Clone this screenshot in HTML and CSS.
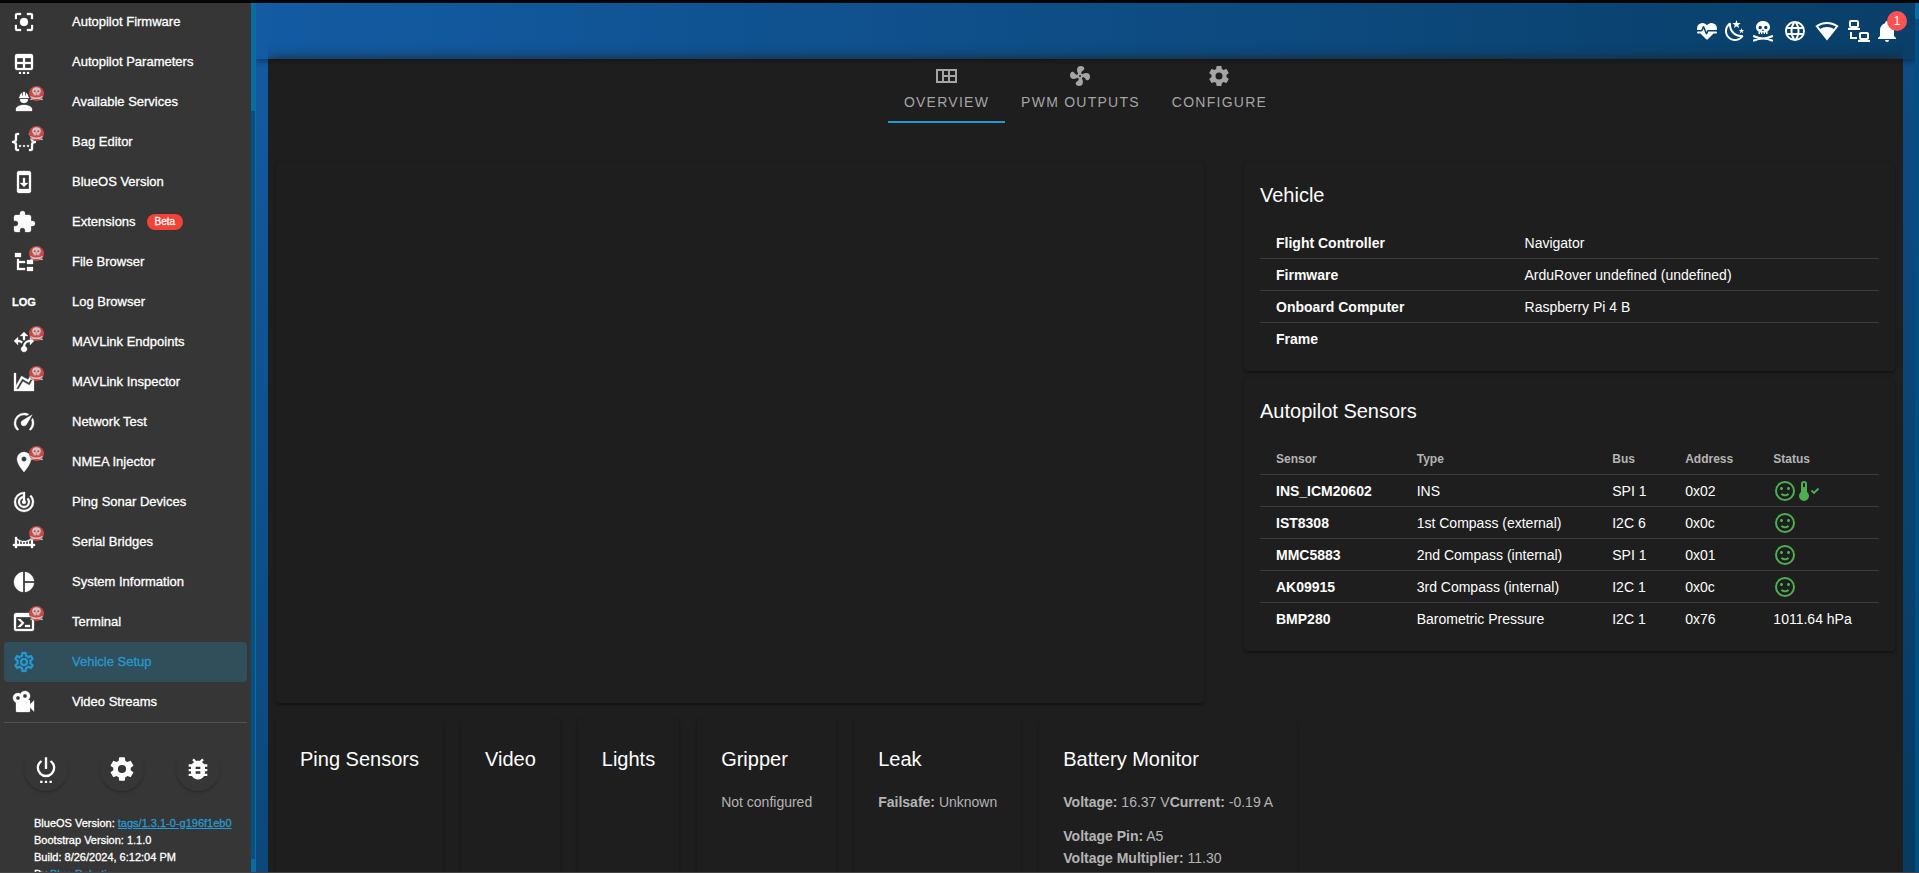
FILE: index.html
```html
<!DOCTYPE html>
<html lang="en">
<head>
<meta charset="utf-8">
<title>BlueOS - Vehicle Setup</title>
<link rel="stylesheet" href="styles.css">
</head>
<body>
<svg class="defs" aria-hidden="true">
  <symbol id="skull" viewBox="0 0 24 24"><path fill-rule="evenodd" d="M12 2C8 2 5 4.600 5 8.200C5 10.200 6 11.600 7.500 12.500V15H9V13.500H10V15H11.300V13.500H12.700V15H14V13.500H15V15H16.500V12.500C18 11.600 19 10.200 19 8.200C19 4.600 16 2 12 2M9.200 6.800A1.700 1.700 0 1 1 9.200 10.200A1.700 1.700 0 1 1 9.200 6.800M14.800 6.800A1.700 1.700 0 1 1 14.800 10.200A1.700 1.700 0 1 1 14.800 6.800M12 10L13 12H11Z"/><path d="M3 17.200Q7 19.500 12 19.500T21 21.500M21 17.200Q17 19.500 12 19.500T3 21.500" fill="none" stroke="currentColor" stroke-width="2.200" stroke-linecap="round"/></symbol>
  <symbol id="cog" viewBox="0 0 24 24"><path d="M12,15.5A3.5,3.5 0 0,1 8.500,12A3.500,3.500 0 0,1 12,8.500A3.500,3.500 0 0,1 15.500,12A3.500,3.500 0 0,1 12,15.500M19.430,12.970C19.470,12.650 19.500,12.330 19.500,12C19.500,11.670 19.470,11.340 19.430,11L21.540,9.370C21.730,9.220 21.780,8.950 21.660,8.730L19.660,5.270C19.540,5.050 19.270,4.960 19.050,5.050L16.560,6.050C16.040,5.660 15.500,5.320 14.870,5.070L14.500,2.420C14.460,2.180 14.250,2 14,2H10C9.750,2 9.540,2.180 9.500,2.420L9.130,5.070C8.500,5.320 7.960,5.660 7.440,6.050L4.950,5.050C4.730,4.960 4.460,5.050 4.340,5.270L2.340,8.730C2.210,8.950 2.270,9.220 2.460,9.370L4.570,11C4.530,11.340 4.500,11.670 4.500,12C4.500,12.330 4.530,12.650 4.570,12.970L2.460,14.630C2.270,14.780 2.210,15.050 2.340,15.270L4.340,18.730C4.460,18.950 4.730,19.030 4.950,18.950L7.440,17.940C7.960,18.340 8.500,18.680 9.130,18.930L9.500,21.580C9.540,21.820 9.750,22 10,22H14C14.250,22 14.460,21.820 14.500,21.580L14.870,18.930C15.500,18.670 16.040,18.340 16.560,17.940L19.050,18.950C19.270,19.030 19.540,18.950 19.660,18.730L21.660,15.270C21.780,15.050 21.730,14.780 21.540,14.630L19.430,12.970Z"/></symbol>
  <symbol id="smile" viewBox="0 0 24 24"><path d="M20,12A8,8 0 0,0 12,4A8,8 0 0,0 4,12A8,8 0 0,0 12,20A8,8 0 0,0 20,12M22,12A10,10 0 0,1 12,22A10,10 0 0,1 2,12A10,10 0 0,1 12,2A10,10 0 0,1 22,12M10,9.5C10,10.3 9.3,11 8.5,11C7.7,11 7,10.3 7,9.5C7,8.7 7.7,8 8.5,8C9.3,8 10,8.7 10,9.5M17,9.5C17,10.3 16.3,11 15.5,11C14.7,11 14,10.3 14,9.5C14,8.7 14.7,8 15.5,8C16.3,8 17,8.7 17,9.5M12,17.23C10.25,17.23 8.71,16.5 7.81,15.42L9.23,14C9.68,14.72 10.75,15.23 12,15.23C13.25,15.23 14.32,14.72 14.77,14L16.19,15.42C15.29,16.5 13.75,17.23 12,17.23Z"/></symbol>
</svg>
<div class="top-edge"></div>
<div class="app">
  <aside class="sidebar">
    <nav class="nav" aria-label="Main">
      <a class="nav-item" href="#"><span class="nav-icon"><svg class="icon" viewBox="0 0 24 24"><path d="M5,15H3V19A2,2 0 0,0 5,21H9V19H5M5,5H9V3H5A2,2 0 0,0 3,5V9H5M19,3H15V5H19V9H21V5A2,2 0 0,0 19,3M19,19H15V21H19A2,2 0 0,0 21,19V15H19M12,8A4,4 0 0,0 8,12A4,4 0 0,0 12,16A4,4 0 0,0 16,12A4,4 0 0,0 12,8Z"/></svg></span>Autopilot Firmware</a>
      <a class="nav-item" href="#"><span class="nav-icon"><svg class="icon" viewBox="0 0 24 24"><path fill-rule="evenodd" d="M5 4H19A2 2 0 0 1 21 6V18A2 2 0 0 1 19 20H5A2 2 0 0 1 3 18V6A2 2 0 0 1 5 4M5 8V12H11V8H5M13 8V12H19V8H13M5 14V18H11V14H5M13 14V18H19V14H13M7 22H9V24H7V22M11 22H13V24H11V22M15 22H17V24H15V22Z"/></svg></span>Autopilot Parameters</a>
      <a class="nav-item" href="#"><span class="nav-icon"><svg class="icon" viewBox="0 0 24 24"><path d="M12,15C7.58,15 4,16.79 4,19V21H20V19C20,16.79 16.42,15 12,15M8,9A4,4 0 0,0 12,13A4,4 0 0,0 16,9M11.5,2C11.2,2 11,2.21 11,2.5V5.5H10V3C10,3 7.75,3.86 7.75,6.75C7.75,6.75 7,6.89 7,8H17C16.95,6.89 16.25,6.75 16.25,6.75C16.25,3.86 14,3 14,3V5.5H13V2.5C13,2.21 12.81,2 12.5,2H11.5Z"/></svg><span class="pirate"><svg viewBox="0 0 24 24"><use href="#skull"/></svg></span></span>Available Services</a>
      <a class="nav-item" href="#"><span class="nav-icon"><svg class="icon" viewBox="0 0 24 24"><path d="M5,3H7V5H5V10A2,2 0 0,1 3,12A2,2 0 0,1 5,14V19H7V21H5C3.93,20.73 3,20.1 3,19V15A2,2 0 0,0 1,13H0V11H1A2,2 0 0,0 3,9V5A2,2 0 0,1 5,3M19,3A2,2 0 0,1 21,5V9A2,2 0 0,0 23,11H24V13H23A2,2 0 0,0 21,15V19A2,2 0 0,1 19,21H17V19H19V14A2,2 0 0,1 21,12A2,2 0 0,1 19,10V5H17V3H19M12,15A1,1 0 0,1 13,16A1,1 0 0,1 12,17A1,1 0 0,1 11,16A1,1 0 0,1 12,15M8,15A1,1 0 0,1 9,16A1,1 0 0,1 8,17A1,1 0 0,1 7,16A1,1 0 0,1 8,15M16,15A1,1 0 0,1 17,16A1,1 0 0,1 16,17A1,1 0 0,1 15,16A1,1 0 0,1 16,15Z"/></svg><span class="pirate"><svg viewBox="0 0 24 24"><use href="#skull"/></svg></span></span>Bag Editor</a>
      <a class="nav-item" href="#"><span class="nav-icon"><svg class="icon" viewBox="0 0 24 24"><path fill-rule="evenodd" d="M17,1H7C5.9,1 5,1.9 5,3V21C5,22.1 5.9,23 7,23H17C18.1,23 19,22.1 19,21V3C19,1.9 18.1,1 17,1M17,19H7V5H17V19M16,13H13V8H11V13H8L12,17L16,13Z"/></svg></span>BlueOS Version</a>
      <a class="nav-item" href="#"><span class="nav-icon"><svg class="icon" viewBox="0 0 24 24"><path d="M20.5,11H19V7C19,5.89 18.1,5 17,5H13V3.5A2.5,2.5 0 0,0 10.5,1A2.5,2.5 0 0,0 8,3.5V5H4A2,2 0 0,0 2,7V10.8H3.5C5,10.8 6.2,12 6.2,13.5C6.2,15 5,16.2 3.5,16.2H2V20A2,2 0 0,0 4,22H7.8V20.5C7.8,19 9,17.8 10.5,17.8C12,17.8 13.2,19 13.2,20.5V22H17A2,2 0 0,0 19,20V16H20.5A2.5,2.5 0 0,0 23,13.5A2.5,2.5 0 0,0 20.5,11Z"/></svg></span>Extensions<span class="beta">Beta</span></a>
      <a class="nav-item" href="#"><span class="nav-icon"><svg class="icon" viewBox="0 0 24 24"><path d="M3,3H9V7H3V3M15,10H21V14H15V10M15,17H21V21H15V17M13,13H7V18H13V20H7L5,20V9H7V11H13V13Z"/></svg><span class="pirate"><svg viewBox="0 0 24 24"><use href="#skull"/></svg></span></span>File Browser</a>
      <a class="nav-item" href="#"><span class="nav-icon nav-icon-log" aria-hidden="true">LOG</span>Log Browser</a>
      <a class="nav-item" href="#"><span class="nav-icon"><svg class="icon" viewBox="0 0 24 24"><path d="M9.64,13.4C8.63,12.5 7.34,12.03 6,12V15L2,11L6,7V10C7.67,10 9.3,10.57 10.63,11.59C10.22,12.15 9.89,12.76 9.64,13.4M18,15V12C17.5,12 13.5,12.16 13.05,16.2C14.61,16.75 15.43,18.47 14.88,20.03C14.33,21.59 12.61,22.41 11.05,21.86C9.5,21.3 8.67,19.59 9.22,18.03C9.5,17.17 10.2,16.5 11.05,16.2C11.34,12.61 14.4,9.88 18,10V7L22,11L18,15M12,2L8,6H11V9.5L12,10.5L13,9.5V6H16Z"/></svg><span class="pirate"><svg viewBox="0 0 24 24"><use href="#skull"/></svg></span></span>MAVLink Endpoints</a>
      <a class="nav-item" href="#"><span class="nav-icon"><svg class="icon" viewBox="0 0 24 24"><path d="M17.45,15.18L22,7.31V21H2V3H4V15.54L9.5,6L16,9.78L20.24,2.45L21.97,3.45L16.74,12.5L10.23,8.75L4.31,19H6.57L10.96,11.44L17.45,15.18Z"/></svg><span class="pirate"><svg viewBox="0 0 24 24"><use href="#skull"/></svg></span></span>MAVLink Inspector</a>
      <a class="nav-item" href="#"><span class="nav-icon"><svg class="icon" viewBox="0 0 24 24"><path d="M12,16A3,3 0 0,1 9,13C9,11.88 9.61,10.9 10.5,10.39L20.21,4.77L14.68,14.35C14.18,15.33 13.17,16 12,16M12,3C13.81,3 15.5,3.5 16.97,4.32L14.87,5.53C14,5.19 13,5 12,5A8,8 0 0,0 4,13C4,15.21 4.89,17.21 6.34,18.65H6.35C6.74,19.04 6.74,19.67 6.35,20.06C5.96,20.45 5.32,20.45 4.93,20.07V20.07C3.12,18.26 2,15.76 2,13A10,10 0 0,1 12,3M22,13C22,15.76 20.88,18.26 19.07,20.07V20.07C18.68,20.45 18.05,20.45 17.66,20.06C17.27,19.67 17.27,19.04 17.66,18.65V18.65C19.11,17.2 20,15.21 20,13C20,12 19.81,11 19.46,10.1L20.67,8C21.5,9.5 22,11.18 22,13Z"/></svg></span>Network Test</a>
      <a class="nav-item" href="#"><span class="nav-icon"><svg class="icon" viewBox="0 0 24 24"><path d="M12,11.5A2.5,2.5 0 0,1 9.5,9A2.5,2.5 0 0,1 12,6.5A2.5,2.5 0 0,1 14.5,9A2.5,2.5 0 0,1 12,11.5M12,2A7,7 0 0,0 5,9C5,14.25 12,22 12,22C12,22 19,14.25 19,9A7,7 0 0,0 12,2Z"/></svg><span class="pirate"><svg viewBox="0 0 24 24"><use href="#skull"/></svg></span></span>NMEA Injector</a>
      <a class="nav-item" href="#"><span class="nav-icon"><svg class="icon" viewBox="0 0 24 24"><path d="M19.07,4.93L17.66,6.34C19.1,7.79 20,9.79 20,12A8,8 0 0,1 12,20A8,8 0 0,1 4,12C4,7.92 7.05,4.56 11,4.07V6.09C8.16,6.57 6,9.03 6,12A6,6 0 0,0 12,18A6,6 0 0,0 18,12C18,10.34 17.33,8.84 16.24,7.76L14.83,9.17C15.55,9.9 16,10.9 16,12A4,4 0 0,1 12,16A4,4 0 0,1 8,12C8,10.14 9.28,8.59 11,8.14V10.28C10.4,10.63 10,11.26 10,12A2,2 0 0,0 12,14A2,2 0 0,0 14,12C14,11.26 13.6,10.62 13,10.28V2H12A10,10 0 0,0 2,12A10,10 0 0,0 12,22A10,10 0 0,0 22,12C22,9.24 20.88,6.74 19.07,4.93Z"/></svg></span>Ping Sonar Devices</a>
      <a class="nav-item" href="#"><span class="nav-icon"><svg class="icon" viewBox="0 0 24 24"><path d="M7,14V10.91C6.28,10.58 5.61,10.18 5,9.71V14H7M5,18H3V16H1V14H3V7H5V8.43C6.8,10 9.27,11 12,11C14.73,11 17.2,10 19,8.43V7H21V14H23V16H21V18H19V16H5V18M17,10.91V14H19V9.71C18.39,10.18 17.72,10.58 17,10.91M16,14V11.32C15.36,11.55 14.69,11.72 14,11.84V14H16M13,14V11.96L12,12L11,11.96V14H13M10,14V11.84C9.31,11.72 8.64,11.55 8,11.32V14H10Z"/></svg><span class="pirate"><svg viewBox="0 0 24 24"><use href="#skull"/></svg></span></span>Serial Bridges</a>
      <a class="nav-item" href="#"><span class="nav-icon"><svg class="icon" viewBox="0 0 24 24"><path d="M11,2V22C5.9,21.5 2,17.2 2,12C2,6.8 5.9,2.5 11,2M13,2V11H22C21.5,6.2 17.8,2.5 13,2M13,13V22C17.7,21.5 21.5,17.8 22,13H13Z"/></svg></span>System Information</a>
      <a class="nav-item" href="#"><span class="nav-icon"><svg class="icon" viewBox="0 0 24 24"><path d="M20,19V7H4V19H20M20,3A2,2 0 0,1 22,5V19A2,2 0 0,1 20,21H4A2,2 0 0,1 2,19V5C2,3.89 2.9,3 4,3H20M13,17V15H18V17H13M9.58,13L5.57,9H8.4L11.7,12.3C12.09,12.69 12.09,13.33 11.7,13.72L8.42,17H5.59L9.58,13Z"/></svg><span class="pirate"><svg viewBox="0 0 24 24"><use href="#skull"/></svg></span></span>Terminal</a>
      <a class="nav-item active" href="#" aria-current="page"><span class="nav-icon"><svg class="icon" viewBox="0 0 24 24"><path d="M12,8A4,4 0 0,1 16,12A4,4 0 0,1 12,16A4,4 0 0,1 8,12A4,4 0 0,1 12,8M12,10A2,2 0 0,0 10,12A2,2 0 0,0 12,14A2,2 0 0,0 14,12A2,2 0 0,0 12,10M10,22C9.75,22 9.54,21.82 9.5,21.58L9.13,18.93C8.5,18.68 7.96,18.34 7.44,17.94L4.95,18.95C4.73,19.03 4.46,18.95 4.34,18.73L2.34,15.27C2.21,15.05 2.27,14.78 2.46,14.63L4.57,12.97L4.5,12L4.57,11L2.46,9.37C2.27,9.22 2.21,8.95 2.34,8.73L4.34,5.27C4.46,5.05 4.73,4.96 4.95,5.05L7.44,6.05C7.96,5.66 8.5,5.32 9.13,5.07L9.5,2.42C9.54,2.18 9.75,2 10,2H14C14.25,2 14.46,2.18 14.5,2.42L14.87,5.07C15.5,5.32 16.04,5.66 16.56,6.05L19.05,5.05C19.27,4.96 19.54,5.05 19.66,5.27L21.66,8.73C21.79,8.95 21.73,9.22 21.54,9.37L19.43,11L19.5,12L19.43,13L21.54,14.63C21.73,14.78 21.79,15.05 21.66,15.27L19.66,18.73C19.54,18.95 19.27,19.04 19.05,18.95L16.56,17.95C16.04,18.34 15.5,18.68 14.87,18.93L14.5,21.58C14.46,21.82 14.25,22 14,22H10M11.25,4L10.88,6.61C9.68,6.86 8.62,7.5 7.85,8.39L5.44,7.35L4.69,8.65L6.8,10.2C6.4,11.37 6.4,12.64 6.8,13.8L4.68,15.36L5.43,16.66L7.86,15.62C8.63,16.5 9.68,17.14 10.87,17.38L11.24,20H12.76L13.13,17.39C14.32,17.14 15.37,16.5 16.14,15.62L18.57,16.66L19.32,15.36L17.2,13.81C17.6,12.64 17.6,11.37 17.2,10.2L19.31,8.65L18.56,7.35L16.15,8.39C15.38,7.5 14.32,6.86 13.12,6.62L12.75,4H11.25Z"/></svg></span>Vehicle Setup</a>
      <a class="nav-item" href="#"><span class="nav-icon"><svg class="icon" viewBox="0 0 24 24"><path d="M18,14.5V11A1,1 0 0,0 17,10H16C18.24,8.39 18.76,5.27 17.15,3C15.54,0.78 12.42,0.26 10.17,1.87C9.5,2.35 8.96,3 8.6,3.73C6.25,2.28 3.17,3 1.72,5.37C0.28,7.72 1,10.8 3.36,12.25C3.57,12.37 3.78,12.5 4,12.58V21A1,1 0 0,0 5,22H17A1,1 0 0,0 18,21V17.5L22,21.5V10.5L18,14.5M13,4A2,2 0 0,1 15,6A2,2 0 0,1 13,8A2,2 0 0,1 11,6A2,2 0 0,1 13,4M6,6A2,2 0 0,1 8,8A2,2 0 0,1 6,10A2,2 0 0,1 4,8A2,2 0 0,1 6,6Z"/></svg></span>Video Streams</a>
    </nav>
    <div class="actions">
      <button class="round" aria-label="Power"><svg viewBox="0 0 24 24"><path d="M7,24H9V22H7V24M15,24H17V22H15V24M11,24H13V22H11V24M13,2H11V12H13V2M16.56,4.44L15.11,5.89C16.84,6.94 18,8.83 18,11A6,6 0 0,1 12,17A6,6 0 0,1 6,11C6,8.83 7.16,6.94 8.88,5.88L7.44,4.44C5.36,5.88 4,8.28 4,11A8,8 0 0,0 12,19A8,8 0 0,0 20,11C20,8.28 18.64,5.88 16.56,4.44Z"/></svg></button>
      <button class="round" aria-label="Settings"><svg viewBox="0 0 24 24"><use href="#cog"/></svg></button>
      <button class="round" aria-label="Report a bug"><svg viewBox="0 0 24 24"><path d="M14,12H10V10H14M14,16H10V14H14M20,8H17.19C16.74,7.22 16.12,6.55 15.37,6.04L17,4.41L15.59,3L13.42,5.17C12.96,5.06 12.49,5 12,5C11.51,5 11.04,5.06 10.59,5.17L8.41,3L7,4.41L8.62,6.04C7.88,6.55 7.26,7.22 6.81,8H4V10H6.09C6.04,10.33 6,10.66 6,11V12H4V14H6V15C6,15.34 6.04,15.67 6.09,16H4V18H6.81C7.85,19.79 9.78,21 12,21C14.22,21 16.15,19.79 17.19,18H20V16H17.91C17.96,15.67 18,15.34 18,15V14H20V12H18V11C18,10.66 17.96,10.33 17.91,10H20V8Z"/></svg></button>
    </div>
    <div class="about">
      <div>BlueOS Version: <a class="link underlined" href="#">tags/1.3.1-0-g196f1eb0</a></div>
      <div>Bootstrap Version: 1.1.0</div>
      <div>Build: 8/26/2024, 6:12:04 PM</div>
      <div>By <a class="link" href="#">Blue Robotics</a></div>
    </div>
  </aside>
  <div class="scroll scroll-side"><div class="thumb"></div><div class="thumb-end"></div></div>

  <div class="page">
    <header class="toolbar">
      <button class="tool" aria-label="Heartbeat"><svg viewBox="0 0 24 24"><path d="M7.5,4A5.5,5.5 0 0,0 2,9.5C2,10 2.09,10.5 2.22,11H6.3L7.57,7.63C7.87,6.83 9.05,6.75 9.43,7.63L11.5,13L12.09,11.58C12.22,11.25 12.57,11 13,11H21.78C21.91,10.5 22,10 22,9.5A5.5,5.5 0 0,0 16.5,4C14.64,4 13,4.93 12,6.34C11,4.93 9.36,4 7.5,4V4M3,12.5A1,1 0 0,0 2,13.5A1,1 0 0,0 3,14.5H5.44L11,20C12,20.9 12,20.9 13,20L18.56,14.5H21A1,1 0 0,0 22,13.5A1,1 0 0,0 21,12.5H13.4L12.47,14.8C12.07,15.81 10.92,15.67 10.55,14.83L8.5,9.5L7.54,11.83C7.39,12.21 7.05,12.5 6.6,12.5H3Z"/></svg></button>
      <button class="tool" aria-label="Theme"><svg viewBox="0 0 24 24"><path d="M17.75,4.09L15.22,6.03L16.13,9.09L13.5,7.28L10.87,9.09L11.78,6.03L9.25,4.09L12.44,4L13.5,1L14.56,4L17.75,4.09M21.25,11L19.61,12.25L20.2,14.23L18.5,13.06L16.8,14.23L17.39,12.25L15.75,11L17.81,10.95L18.5,9L19.19,10.95L21.25,11M18.97,15.95C19.8,15.87 20.69,17.05 20.16,17.8C19.84,18.25 19.5,18.67 19.08,19.07C15.17,23 8.84,23 4.94,19.07C1.03,15.17 1.03,8.83 4.94,4.93C5.34,4.53 5.76,4.17 6.21,3.85C6.96,3.32 8.14,4.21 8.06,5.04C7.79,7.9 8.75,10.87 10.95,13.06C13.14,15.26 16.1,16.22 18.97,15.95M17.33,17.97C14.5,17.81 11.7,16.64 9.53,14.5C7.36,12.31 6.2,9.5 6.04,6.68C3.23,9.82 3.34,14.64 6.35,17.66C9.37,20.67 14.19,20.78 17.33,17.97Z"/></svg></button>
      <button class="tool" aria-label="Pirate mode"><svg viewBox="0 0 24 24"><use href="#skull"/></svg></button>
      <button class="tool tool-wide" aria-label="Internet"><svg viewBox="0 0 24 24"><path d="M16.36,14C16.44,13.34 16.5,12.68 16.5,12C16.5,11.32 16.44,10.66 16.36,10H19.74C19.9,10.64 20,11.31 20,12C20,12.69 19.9,13.36 19.74,14M14.59,19.56C15.19,18.45 15.65,17.25 15.97,16H18.92C17.96,17.65 16.43,18.93 14.59,19.56M14.34,14H9.66C9.56,13.34 9.5,12.68 9.5,12C9.5,11.32 9.56,10.65 9.66,10H14.34C14.43,10.65 14.5,11.32 14.5,12C14.5,12.68 14.43,13.34 14.34,14M12,19.96C11.17,18.76 10.5,17.43 10.09,16H13.91C13.5,17.43 12.83,18.76 12,19.96M8,8H5.08C6.03,6.34 7.57,5.06 9.4,4.44C8.8,5.55 8.35,6.75 8,8M5.08,16H8C8.35,17.25 8.8,18.45 9.4,19.56C7.57,18.93 6.03,17.65 5.08,16M4.26,14C4.1,13.36 4,12.69 4,12C4,11.31 4.1,10.64 4.26,10H7.64C7.56,10.66 7.5,11.32 7.5,12C7.5,12.68 7.56,13.34 7.64,14M12,4.03C12.83,5.23 13.5,6.57 13.91,8H10.09C10.5,6.57 11.17,5.23 12,4.03M18.92,8H15.97C15.65,6.75 15.19,5.55 14.59,4.44C16.43,5.07 17.96,6.34 18.92,8M12,2C6.47,2 2,6.5 2,12A10,10 0 0,0 12,22A10,10 0 0,0 22,12A10,10 0 0,0 12,2Z"/></svg></button>
      <button class="tool tool-wide" aria-label="Wi-Fi"><svg viewBox="0 0 24 24"><path d="M12,3C7.79,3 3.7,4.41 0.38,7C4.41,12.06 7.89,16.37 12,21.5C16.08,16.42 20.24,11.24 23.65,7C20.32,4.41 16.22,3 12,3M12,5C15.07,5 18.09,5.86 20.71,7.45L18.77,9.88C17.26,9 14.88,8 12,8C9.11,8 6.73,9 5.21,9.89L3.27,7.45C5.91,5.85 8.93,5 12,5Z" fill-rule="evenodd"/></svg></button>
      <button class="tool tool-wide" aria-label="Ethernet"><svg viewBox="0 0 24 24"><path d="M4,1C2.89,1 2,1.89 2,3V7C2,8.11 2.89,9 4,9H1V11H13V9H10C11.11,9 12,8.11 12,7V3C12,1.89 11.11,1 10,1H4M4,3H10V7H4V3M3,13V20H10V18H5V13H3M14,13C12.89,13 12,13.89 12,15V19C12,20.11 12.89,21 14,21H11V23H23V21H20C21.11,21 22,20.11 22,19V15C22,13.89 21.11,13 20,13H14M14,15H20V19H14V15Z" fill-rule="evenodd"/></svg></button>
      <button class="tool" aria-label="Notifications"><svg viewBox="0 0 24 24"><path d="M21,19V20H3V19L5,17V11C5,7.9 7.03,5.17 10,4.29C10,4.19 10,4.1 10,4A2,2 0 0,1 12,2A2,2 0 0,1 14,4C14,4.1 14,4.19 14,4.29C16.97,5.17 19,7.9 19,11V17L21,19M14,21A2,2 0 0,1 12,23A2,2 0 0,1 10,21"/></svg><span class="count">1</span></button>
    </header>
    <main class="panel">
      <div class="tabs" role="tablist">
        <button class="tab selected" role="tab" aria-selected="true"><svg viewBox="0 0 24 24"><path fill-rule="evenodd" d="M2 5H23V19H2V5M4 7V17H8V7H4M10 7V11H14V7H10M10 13V17H14V13H10M16 7V11H21V7H16M16 13V17H21V13H16Z"/></svg>OVERVIEW</button>
        <button class="tab" role="tab"><svg viewBox="0 0 24 24"><path d="M12,11A1,1 0 0,0 11,12A1,1 0 0,0 12,13A1,1 0 0,0 13,12A1,1 0 0,0 12,11M12.5,2C17,2 17.11,5.57 14.75,6.75C13.76,7.24 13.32,8.29 13.13,9.22C13.61,9.42 14.03,9.73 14.35,10.13C18.05,8.13 22.03,8.92 22.03,12.5C22.03,17 18.46,17.1 17.28,14.73C16.78,13.74 15.72,13.3 14.79,13.11C14.59,13.59 14.28,14 13.88,14.34C15.87,18.03 15.08,22 11.5,22C7,22 6.91,18.42 9.27,17.24C10.25,16.75 10.69,15.71 10.89,14.79C10.4,14.59 9.97,14.27 9.65,13.87C5.96,15.85 2,15.07 2,11.5C2,7 5.56,6.89 6.74,9.26C7.24,10.25 8.29,10.68 9.22,10.87C9.41,10.39 9.73,9.97 10.14,9.65C8.15,5.96 8.94,2 12.5,2Z"/></svg>PWM OUTPUTS</button>
        <button class="tab" role="tab"><svg viewBox="0 0 24 24"><use href="#cog"/></svg>CONFIGURE</button>
      </div>
      <div class="overview">
        <section class="card viewer" aria-label="Vehicle viewer"></section>
        <div class="column">
          <section class="card">
            <h2 class="title">Vehicle</h2>
            <table class="grid">
              <tbody>
                <tr><th scope="row">Flight Controller</th><td>Navigator</td></tr>
                <tr><th scope="row">Firmware</th><td>ArduRover undefined (undefined)</td></tr>
                <tr><th scope="row">Onboard Computer</th><td>Raspberry Pi 4 B</td></tr>
                <tr><th scope="row">Frame</th><td></td></tr>
              </tbody>
            </table>
          </section>
          <section class="card">
            <h2 class="title">Autopilot Sensors</h2>
            <table class="grid">
              <thead>
                <tr><th>Sensor</th><th>Type</th><th>Bus</th><th>Address</th><th>Status</th></tr>
              </thead>
              <tbody>
                <tr><th scope="row">INS_ICM20602</th><td>INS</td><td>SPI 1</td><td>0x02</td><td><span class="status"><svg viewBox="0 0 24 24"><use href="#smile"/></svg><svg viewBox="0 0 24 24"><path fill-rule="evenodd" d="M10 13V5A3 3 0 0 0 4 5V13A5 5 0 1 0 10 13M7 4A1 1 0 0 1 8 5V8H6V5A1 1 0 0 1 7 4Z"/><path d="M14.500 11.500L17 14L21.500 9.500" fill="none" stroke="currentColor" stroke-width="1.800"/></svg></span></td></tr>
                <tr><th scope="row">IST8308</th><td>1st Compass (external)</td><td>I2C 6</td><td>0x0c</td><td><span class="status"><svg viewBox="0 0 24 24"><use href="#smile"/></svg></span></td></tr>
                <tr><th scope="row">MMC5883</th><td>2nd Compass (internal)</td><td>SPI 1</td><td>0x01</td><td><span class="status"><svg viewBox="0 0 24 24"><use href="#smile"/></svg></span></td></tr>
                <tr><th scope="row">AK09915</th><td>3rd Compass (internal)</td><td>I2C 1</td><td>0x0c</td><td><span class="status"><svg viewBox="0 0 24 24"><use href="#smile"/></svg></span></td></tr>
                <tr><th scope="row">BMP280</th><td>Barometric Pressure</td><td>I2C 1</td><td>0x76</td><td>1011.64 hPa</td></tr>
              </tbody>
            </table>
          </section>
        </div>
      </div>
      <div class="widgets">
        <section class="card widget"><h2 class="title">Ping Sensors</h2></section>
        <section class="card widget"><h2 class="title">Video</h2></section>
        <section class="card widget"><h2 class="title">Lights</h2></section>
        <section class="card widget"><h2 class="title">Gripper</h2><p>Not configured</p></section>
        <section class="card widget"><h2 class="title">Leak</h2><p><b>Failsafe:</b> Unknown</p></section>
        <section class="card widget"><h2 class="title">Battery Monitor</h2><p><b>Voltage:</b> 16.37 V<b>Current:</b> -0.19 A</p><p><b>Voltage Pin:</b> A5<br><b>Voltage Multiplier:</b> 11.30</p></section>
      </div>
    </main>
  </div>
  <div class="scroll scroll-page"><div class="thumb"></div></div>
</div>
<div class="bottom-edge"></div>
</body>
</html>
```
FILE: styles.css
```css
* { box-sizing: border-box; }
body {
  margin: 0;
  padding-top: 2px;
  height: 100vh;
  overflow: hidden;
  background: #363636;
  color: #fff;
  font: 14px/22px "Liberation Sans", Arial, sans-serif;
}
svg { fill: currentColor; display: block; }
.defs { position: absolute; width: 0; height: 0; }
button { border: 0; padding: 0; background: none; color: inherit; font: inherit; }
a { color: inherit; text-decoration: none; }

.top-edge { position: fixed; inset: 0 0 auto; height: 3px; background: #050505; z-index: 5; }
.bottom-edge { position: fixed; inset: auto 0 0; height: 1px; background: #444; z-index: 5; }

.app { display: flex; height: 100%; }

/* Sidebar */
.sidebar { width: 251px; flex: none; overflow: hidden; background: #363636; }
.nav { margin: 0 4px; border-bottom: 1px solid #515151; }
.nav-item {
  display: flex;
  align-items: center;
  height: 40px;
  padding-left: 8px;
  border-radius: 4px;
  font-size: 13px;
  -webkit-text-stroke: 0.3px currentColor;
}
.nav-item.active { background: #314e5b; color: #2699d0; }
.nav-icon { position: relative; width: 24px; margin-right: 36px; }
.nav-icon-log { font-weight: bold; font-size: 11px; line-height: 24px; text-align: center; }
.icon { width: 24px; height: 24px; stroke: currentColor; stroke-width: 0.3px; }
.pirate {
  position: absolute;
  top: -4px;
  left: 17px;
  width: 15px;
  height: 15px;
  border-radius: 50%;
  background: #c94848;
  color: #d0c4c4;
}
.beta {
  margin-left: 11px;
  padding: 0 8px;
  border-radius: 8px;
  background: #f44336;
  font-size: 10px;
  line-height: 16px;
}
.actions { display: flex; justify-content: space-between; padding: 24px 31px 0 24px; }
.round {
  display: grid;
  place-items: center;
  width: 44px;
  height: 44px;
  border-radius: 50%;
  box-shadow: 0 2px 3px rgba(0, 0, 0, 0.2);
}
.round svg { width: 28px; height: 28px; }
.about { padding: 24px 0 0 34px; font-size: 11px; line-height: 17px; white-space: nowrap; -webkit-text-stroke: 0.3px currentColor; }
.link { color: #2699d0; }
.underlined { text-decoration: underline; }

/* Scroll rails */
.scroll { display: flex; flex-direction: column; justify-content: space-between; flex: none; background: #005082; }
.scroll-side { width: 5px; border-right: 1px solid #1c6796; }
.scroll-page { width: 4px; }
.thumb { height: 109px; background: #0070a4; }
.thumb-end { height: 14px; background: #0070a4; }
.scroll-page .thumb { height: 17px; }

/* Page */
.page {
  flex: 1;
  min-width: 0;
  display: flex;
  flex-direction: column;
  overflow: hidden;
  background: linear-gradient(160deg, #135ba3, #063a60);
}
.toolbar {
  display: flex;
  align-items: center;
  justify-content: flex-end;
  gap: 4px;
  height: 57px;
  flex: none;
  padding-right: 16px;
  background: linear-gradient(to right, #135ba3, #093f68);
  box-shadow: 0 2px 6px rgba(0, 0, 0, 0.4);
}
.tool { position: relative; width: 24px; height: 24px; }
.tool-wide { margin-left: 4px; }
.count {
  position: absolute;
  top: -8px;
  right: -8px;
  width: 20px;
  height: 20px;
  border-radius: 50%;
  background: #ff5252;
  font-size: 12px;
  line-height: 20px;
  text-align: center;
}
.panel {
  flex: 1;
  margin: 0 12px;
  background: linear-gradient(#171717, #1e1e1e 6px);
  box-shadow: 0 0 12px rgba(30, 30, 30, 0.9);
  clip-path: inset(-16px 0 0 0);
}
.tabs { display: flex; justify-content: center; }
.tab {
  display: flex;
  flex-direction: column;
  align-items: center;
  gap: 4px;
  padding: 5px 16px 8px;
  border-bottom: 2px solid transparent;
  color: #a5a5a5;
  line-height: 21px;
  letter-spacing: 1.25px;
}
.tab svg { width: 24px; height: 24px; }
.tab.selected { border-color: #2699d0; }
.overview {
  display: grid;
  grid-template-columns: 928fr 651fr;
  gap: 40px;
  padding: 40px 8px 0;
}
.column { display: flex; flex-direction: column; gap: 8px; }
.card {
  padding: 16px;
  border-radius: 4px;
  background: #1e1e1e;
  box-shadow: 0 2px 2px rgba(0, 0, 0, 0.25), 0 1px 4px rgba(0, 0, 0, 0.12);
}
.viewer { height: 540px; }
.title { margin: 0; font-size: 20px; line-height: 32px; font-weight: normal; }
.grid { width: 100%; margin-top: 16px; border-collapse: separate; border-spacing: 0; }
.grid th, .grid td { height: 32px; padding: 0 16px; border-bottom: 1px solid #3b3b3b; text-align: left; }
.grid tbody tr:last-child > * { border-bottom: 0; }
.grid thead th { font-size: 12px; color: #b4b4b4; }
.status { display: flex; color: #4caf50; }
.status svg { width: 24px; height: 24px; }
.widgets { display: flex; gap: 18px; padding: 16px 8px 0; }
.widget { min-height: 180px; padding: 24px; }
.widget p { margin: 16px 0 0; color: #b4b4b4; }
.widget p + p { margin-top: 12px; }
```
